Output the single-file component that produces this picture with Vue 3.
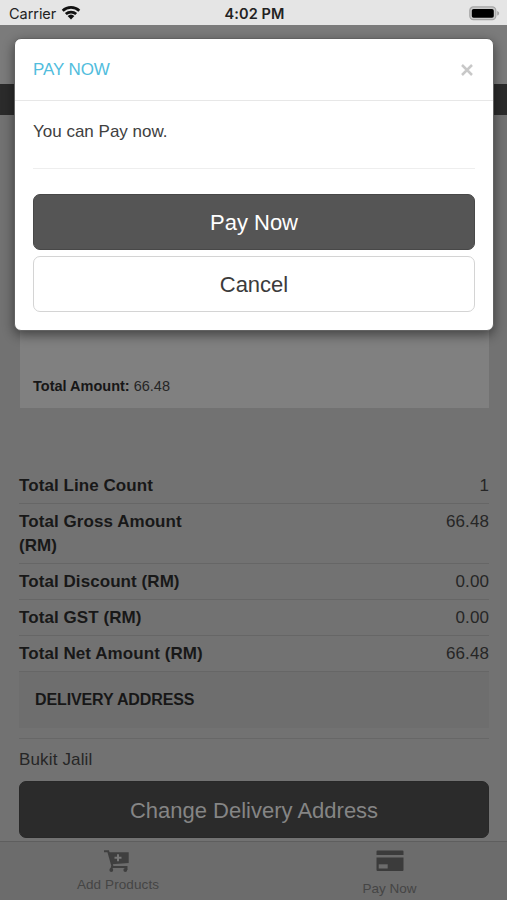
<script setup>
const totals = [
  { label: 'Total Line Count', value: '1' },
  { label: 'Total Gross Amount (RM)', value: '66.48' },
  { label: 'Total Discount (RM)', value: '0.00' },
  { label: 'Total GST (RM)', value: '0.00' },
  { label: 'Total Net Amount (RM)', value: '66.48' },
]
</script>

<template>
  <div class="screen">
    <header class="status">
      <div class="carrier">
        <span>Carrier</span>
        <svg class="wifi" width="20" height="15" viewBox="0 0 20 15">
          <g fill="none" stroke="#111" stroke-width="2.7">
            <path d="M1.7 5.7a12 12 0 0 1 16.6 0" />
            <path d="M4.8 9.1a7.6 7.6 0 0 1 10.4 0" />
          </g>
          <path d="M6.6 11a5 5 0 0 1 6.8 0L10 14.4z" fill="#111" />
        </svg>
      </div>
      <span class="time">4:02 PM</span>
      <svg class="battery" width="31" height="15" viewBox="0 0 31 15">
        <rect x=".8" y=".9" width="26" height="12.8" rx="3.6" fill="#c9c9c9" stroke="#a5a5a5" stroke-width="1.2" />
        <rect x="2.8" y="2.9" width="22" height="8.8" rx="1.8" fill="#000" />
        <path d="M28.2 5c2.6.9 2.6 3.7 0 4.6z" fill="#a5a5a5" />
      </svg>
    </header>

    <div class="topbar"></div>
    <div class="strip"></div>

    <main class="page">
      <section class="card"><p><b>Total Amount:</b> 66.48</p></section>
      <dl class="totals">
        <div v-for="row in totals" :key="row.label" class="row">
          <dt>{{ row.label }}</dt>
          <dd>{{ row.value }}</dd>
        </div>
      </dl>
      <h2 class="section-title">DELIVERY ADDRESS</h2>
      <p class="address">Bukit Jalil</p>
      <button class="btn change">Change Delivery Address</button>
    </main>

    <nav class="tabs">
      <a class="tab add">
        <svg width="26" height="23" viewBox="0 0 26 23">
          <path d="M0 1.200h4.200L8.500 16.500 7 19" fill="none" stroke="#3f3f3f" stroke-width="2" />
          <path d="M4.500 2.300h20.200V13L7.800 14.300z" fill="#3f3f3f" />
          <path d="M7 17h15.500v3" fill="none" stroke="#3f3f3f" stroke-width="2" />
          <circle cx="7.300" cy="20" r="1.900" fill="#3f3f3f" />
          <circle cx="21.300" cy="20" r="1.900" fill="#3f3f3f" />
          <path d="M14 4.200v7M10.500 7.700h7" stroke="#777" stroke-width="2" />
        </svg>
        <span>Add Products</span>
      </a>
      <a class="tab pay">
        <svg width="28" height="22" viewBox="0 0 28 22">
          <path d="M.5 1.500q0-1 1-1h25q1 0 1 1V5H.5zM.5 7.500h27V20q0 1-1 1h-25q-1 0-1-1z" fill="#3b3b3b" />
          <rect x="2.700" y="14.300" width="9" height="4.200" fill="#6c6c6c" />
        </svg>
        <span>Pay Now</span>
      </a>
    </nav>

    <div class="modal">
      <div class="modal-head">
        <h1>PAY NOW</h1>
        <svg width="12" height="12" viewBox="0 0 12 12">
          <path d="M1 1l10 10M11 1L1 11" stroke="#c8c8c8" stroke-width="2.500" />
        </svg>
      </div>
      <div class="modal-body">
        <p>You can Pay now.</p>
        <div class="actions">
          <button class="btn primary">Pay Now</button>
          <button class="btn cancel">Cancel</button>
        </div>
      </div>
    </div>
  </div>
</template>

<style>
body { margin: 0; }
</style>

<style scoped>
* { box-sizing: border-box; margin: 0; }
.screen {
  position: relative;
  display: flex;
  flex-direction: column;
  width: 507px;
  height: 900px;
  overflow: hidden;
  background: #727272;
  color: #262626;
  font: 17px/24px "Liberation Sans", Arial, sans-serif;
}
.status {
  display: grid;
  grid-template-columns: 1fr auto 1fr;
  align-items: center;
  height: 25px;
  flex: none;
  padding: 2px 7px 0 9px;
  background: #e5e5e5;
  color: #222;
  font: 14.5px/22px Inter, sans-serif;
}
.carrier { display: flex; align-items: center; gap: 5px; letter-spacing: -.05px; }
.wifi { margin-top: -2px; }
.time { font-weight: 600; letter-spacing: .1px; }
.battery { justify-self: end; margin-top: -1px; }
.topbar { height: 59px; flex: none; background: #7b7b7b; }
.strip { height: 31px; flex: none; background: #2b2b2b; }
.page { flex: 1; padding: 0 18px 0 19px; }
.card {
  display: flex;
  align-items: flex-end;
  height: 293px;
  margin: 0 0 0 1px;
  padding: 0 13px 10px;
  background: #808080;
  font-size: 14.5px;
}
.card b { color: #171717; }
.totals { padding-top: 60px; }
.row {
  display: flex;
  justify-content: space-between;
  padding: 6px 0 5px;
  border-bottom: 1px solid #666;
}
dt { width: 190px; font-weight: bold; color: #181818; letter-spacing: .07px; }
dd { letter-spacing: .1px; }
.section-title {
  height: 56px;
  padding: 16px;
  background: #6e6e6e;
  color: #171717;
  font-size: 16px;
  line-height: 24px;
  letter-spacing: -.12px;
}
.address { margin-top: 10px; padding: 9px 0; border-top: 1px solid #676767; letter-spacing: .15px; }
.btn {
  display: block;
  width: 100%;
  height: 56px;
  padding: 2px 0 0;
  border: 1px solid #555;
  border-radius: 7px;
  font: 22px/52px "Liberation Sans", Arial, sans-serif;
}
.change { height: 57px; padding-top: 3px; background: #2b2b2b; border-color: #282828; color: #858585; }
.tabs {
  display: flex;
  height: 59px;
  flex: none;
  border-top: 1px solid #5e5e5e;
  background: #6c6c6c;
  color: #454545;
  font-size: 13.5px;
  line-height: 16px;
}
.tab { display: flex; flex-direction: column; align-items: center; }
.add { width: 236px; padding-top: 8px; }
.add svg { margin-left: -2px; }
.add span { margin-top: 4px; letter-spacing: .1px; }
.pay { width: 271px; padding: 8px 0 0 36px; }
.pay span { margin-top: 9px; }
.modal {
  position: absolute;
  top: 38px;
  left: 14px;
  width: 480px;
  height: 293px;
  border: 1px solid #626262;
  border-radius: 7px;
  background: #fff;
  box-shadow: 0 4px 12px rgba(0, 0, 0, .48);
}
.modal-head {
  display: flex;
  align-items: center;
  justify-content: space-between;
  height: 62px;
  padding: 0 20px 0 18px;
  border-bottom: 1px solid #e7e7e7;
}
h1 { color: #51bddd; font-size: 17px; font-weight: normal; letter-spacing: -.1px; }
.modal-body { padding: 19px 18px 0; }
.modal-body p { color: #404040; }
.actions {
  display: flex;
  flex-direction: column;
  gap: 6px;
  margin-top: 24px;
  padding-top: 25px;
  border-top: 1px solid #eee;
}
.primary { background: #555; border-color: #484848; color: #fff; }
.cancel { background: #fff; border-color: #d4d4d4; color: #3b3b3b; }
</style>
